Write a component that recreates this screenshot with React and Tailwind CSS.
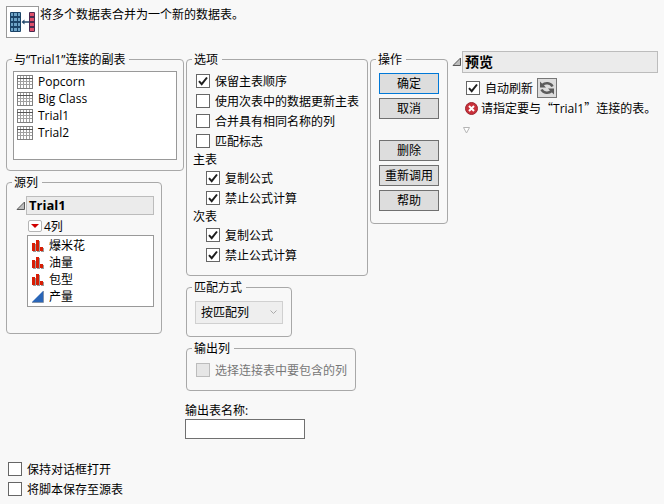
import React from "react";

const TABLES = ["Popcorn", "Big Class", "Trial1", "Trial2"];

const COLUMNS = [
  { name: "爆米花", type: "nominal" },
  { name: "油量", type: "nominal" },
  { name: "包型", type: "nominal" },
  { name: "产量", type: "continuous" },
];

function JoinIcon() {
  const rows = [0, 1, 2, 3];
  return (
    <svg width="27" height="22" viewBox="0 0 27 22" aria-hidden="true">
      <rect x="1" y="1" width="11" height="20" rx="1" fill="#1b4468" />
      {rows.map((r) => (
        <g key={r} fill="#6da3c6">
          <rect x="2" y={2 + r * 5} width="2" height="3" />
          <rect x="5" y={2 + r * 5} width="3" height="3" />
          <rect x="9" y={2 + r * 5} width="2" height="3" />
        </g>
      ))}
      <path d="M12.5 11l3-2.500v1.800h5v1.400h-5v1.800z" fill="#24486b" />
      <rect x="20" y="1" width="6" height="20" rx="1" fill="#4a2a50" />
      {rows.map((r) => (
        <rect key={r} x="21" y={2 + r * 5} width="4" height="3" fill="#e0506a" />
      ))}
    </svg>
  );
}

function TableIcon() {
  return (
    <svg width="16" height="14" viewBox="0 0 16 14" className="shrink-0" aria-hidden="true">
      <rect width="16" height="14" fill="#fff" />
      <path
        d="M0 3.5h16M0 6.5h16M0 9.5h16M3.5 0v14M6.5 0v14M9.5 0v14M12.5 0v14"
        stroke="#a0a0a0"
        fill="none"
      />
      <rect x="0.5" y="0.5" width="15" height="13" fill="none" stroke="#808080" />
      <path d="M0 3.5h16" stroke="#555" />
    </svg>
  );
}

function NominalIcon() {
  return (
    <svg width="12" height="12" viewBox="0 0 12 12" className="shrink-0" aria-hidden="true">
      <path d="M1 4h3v8H1zM5 1h3v11H5zM9 8h3v4H9z" fill="#9a9a9a" />
      <path d="M0 3h3v8H0zM4 0h3v11H4zM8 7h3v4H8z" fill="#d81e05" />
    </svg>
  );
}

function ContinuousIcon() {
  return (
    <svg width="12" height="12" viewBox="0 0 12 12" className="shrink-0" aria-hidden="true">
      <path d="M0 11L11 0v11z" fill="#2a66b8" />
      <path d="M0 11.5h11.5V0" fill="none" stroke="#8494ab" />
    </svg>
  );
}

function Disclosure({ label }) {
  return (
    <button type="button" aria-label={label} className="block shrink-0">
      <svg width="10" height="10" viewBox="0 0 10 10" aria-hidden="true">
        <path d="M1 8.5L8.5 1v7.5z" fill="#bdbdbd" stroke="#5a5a5a" />
      </svg>
    </button>
  );
}

function Check({ label, checked = false, disabled = false }) {
  return (
    <label className="flex h-5 items-center gap-[5px] whitespace-nowrap">
      <span className="grid shrink-0">
        <input
          type="checkbox"
          defaultChecked={checked}
          disabled={disabled}
          className="peer col-start-1 row-start-1 size-3.5 appearance-none border border-[#666] bg-white disabled:border-[#bcbcbc] disabled:bg-[#e6e6e6]"
        />
        <svg
          viewBox="0 0 14 14"
          className="pointer-events-none invisible col-start-1 row-start-1 size-3.5 peer-checked:visible"
          aria-hidden="true"
        >
          <path d="M3 7.2l2.7 3L11 3.5" fill="none" stroke="#1e1e1e" strokeWidth="2" />
        </svg>
      </span>
      <span className={disabled ? "text-[#777]" : ""}>{label}</span>
    </label>
  );
}

function Group({ title, className = "", bodyClass = "", children }) {
  return (
    <fieldset className={`min-w-0 rounded-[4px] border border-[#a8a8a8] ${className}`}>
      <legend className="ml-[5px] pr-1 pl-0.5">{title}</legend>
      <div className={bodyClass}>{children}</div>
    </fieldset>
  );
}

function ActionButton({ primary = false, children }) {
  return (
    <button
      type="button"
      className={`block h-[21px] w-full border bg-[#dddddd] text-center leading-[19px] ${
        primary ? "border-[#0078d7]" : "border-[#707070]"
      }`}
    >
      {children}
    </button>
  );
}

export default function App() {
  return (
    <main
      lang="zh-CN"
      className="min-h-screen bg-[#f8f8f8] px-1.5 pt-1.5 pb-1 font-['Open_Sans','Noto_Sans_CJK_SC',sans-serif] text-[12px] leading-[17px] text-black"
    >
      <header className="flex items-start gap-px">
        <div className="flex h-8 w-[33px] items-center justify-center border border-[#999] bg-white">
          <JoinIcon />
        </div>
        <p>将多个数据表合并为一个新的数据表。</p>
      </header>

      <div className="mt-[13px] flex items-start gap-0.5">
        <div className="flex w-[178px] shrink-0 flex-col items-start gap-[3px]">
          <Group title="与“Trial1”连接的副表" className="w-full" bodyClass="px-1.5 pt-[3px] pb-2.5">
            <ul role="listbox" aria-label="副表" className="min-h-[89px] border border-[#999] bg-white px-[3px] py-px">
              {TABLES.map((name) => (
                <li key={name} role="option" aria-selected="false" className="flex items-center gap-[5px]">
                  <TableIcon />
                  {name}
                </li>
              ))}
            </ul>
          </Group>

          <Group title="源列" className="w-[156px]" bodyClass="pt-[5px] pr-[7px] pb-[26px] pl-[9px]">
            <div className="flex items-center">
              <Disclosure label="折叠 Trial1" />
              <h2 className="flex-1 border border-[#bcbcbc] bg-[#ebebeb] px-0.5 text-[13px] font-bold">Trial1</h2>
            </div>
            <div className="mt-0.5 ml-3 flex h-[18px] items-center gap-0.5">
              <button type="button" aria-label="列选项" className="flex h-3 w-3.5 items-center justify-center rounded-[2px] border border-[#b5b5b5] bg-white">
                <svg width="8" height="4" viewBox="0 0 8 4" aria-hidden="true">
                  <path d="M0 0h8L4 4z" fill="#d00000" />
                </svg>
              </button>
              <span>4列</span>
            </div>
            <ul role="listbox" aria-label="源列" className="ml-[11px] border border-[#999] bg-white px-1 py-px">
              {COLUMNS.map((col) => (
                <li key={col.name} role="option" aria-selected="false" className="flex items-center gap-[5px]">
                  {col.type === "nominal" ? <NominalIcon /> : <ContinuousIcon />}
                  {col.name}
                </li>
              ))}
            </ul>
          </Group>
        </div>

        <div className="flex w-[182px] shrink-0 flex-col items-start gap-[3px]">
          <Group title="选项" className="w-full" bodyClass="px-[9px] pt-[3px] pb-2.5">
            <Check label="保留主表顺序" checked />
            <Check label="使用次表中的数据更新主表" />
            <Check label="合并具有相同名称的列" />
            <Check label="匹配标志" />
            <p className="-ml-[3px]">主表</p>
            <div className="ml-2.5">
              <Check label="复制公式" checked />
              <Check label="禁止公式计算" checked />
            </div>
            <p className="-ml-[3px]">次表</p>
            <div className="ml-2.5">
              <Check label="复制公式" checked />
              <Check label="禁止公式计算" checked />
            </div>
          </Group>

          <Group title="匹配方式" className="w-[106px]" bodyClass="px-2 pt-[5px] pb-3">
            <div className="grid items-center">
              <select
                aria-label="匹配方式"
                disabled
                className="col-start-1 row-start-1 h-[23px] w-full appearance-none border border-[#d0d0d0] bg-[#eeeeee] pl-[5px] text-black opacity-100"
              >
                <option>按匹配列</option>
              </select>
              <svg width="7" height="5" viewBox="0 0 7 5" className="pointer-events-none col-start-1 row-start-1 mr-1.5 justify-self-end" aria-hidden="true">
                <path d="M0.5 0.5l3 3 3-3" fill="none" stroke="#aaa" />
              </svg>
            </div>
          </Group>

          <Group title="输出列" className="w-[170px]" bodyClass="px-[9px] pt-[3px] pb-2.5">
            <Check label="选择连接表中要包含的列" disabled />
          </Group>

          <div className="mt-2 -ml-px">
            <label htmlFor="output-name" className="block">输出表名称:</label>
            <input id="output-name" type="text" className="block h-5 w-[120px] border border-[#707070] bg-white px-1" />
          </div>
        </div>

        <Group title="操作" className="w-[78px] shrink-0" bodyClass="px-2 pt-[5px] pb-3">
          <div className="flex flex-col gap-1">
            <ActionButton primary>确定</ActionButton>
            <ActionButton>取消</ActionButton>
          </div>
          <div className="mt-[21px] flex flex-col gap-1">
            <ActionButton>删除</ActionButton>
            <ActionButton>重新调用</ActionButton>
            <ActionButton>帮助</ActionButton>
          </div>
        </Group>

        <section className="ml-0.5 min-w-0 flex-1">
          <div className="flex items-center">
            <Disclosure label="折叠预览" />
            <h2 className="flex-1 border border-[#bcbcbc] bg-[#ebebeb] px-0.5 text-[14px] leading-5 font-bold">预览</h2>
          </div>
          <div className="mt-[5px] ml-3.5 flex items-center gap-1">
            <Check label="自动刷新" checked />
            <button type="button" aria-label="刷新" className="flex size-5 items-center justify-center border border-[#777] bg-[#dddddd]">
              <svg width="16" height="16" viewBox="0 0 16 16" aria-hidden="true">
                <path d="M3.500 5C6 2.500 11.500 2.500 13.500 6.500M12.500 11C10 13.500 4.500 13.500 2.500 9.500" fill="none" stroke="#5c5c5c" strokeWidth="2.6" />
                <path d="M1 1.500v6h6zM15 14.500v-6H9z" fill="#5c5c5c" />
              </svg>
            </button>
          </div>
          <div className="mt-px ml-[13px] flex items-center gap-[3px]">
            <svg width="13" height="13" viewBox="0 0 13 13" className="shrink-0" aria-hidden="true">
              <circle cx="6.5" cy="6.5" r="6" fill="#c9303a" stroke="#9c2630" />
              <path d="M4 4l5 5M9 4l-5 5" stroke="#fff" strokeWidth="2" />
            </svg>
            <p className="whitespace-nowrap">
              请指定要与<span className="font-['Noto_Sans_CJK_SC',sans-serif]">“</span>Trial1
              <span className="font-['Noto_Sans_CJK_SC',sans-serif]">”</span>连接的表。
            </p>
          </div>
          <button type="button" aria-label="更多" className="mt-2.5 ml-[11px] block">
            <svg width="7" height="7" viewBox="0 0 7 7" aria-hidden="true">
              <path d="M0.500 0.500h6L3.500 6z" fill="#fff" stroke="#b5b5b5" />
            </svg>
          </button>
        </section>
      </div>

      <div className="mt-5 ml-0.5">
        <Check label="保持对话框打开" />
        <Check label="将脚本保存至源表" />
      </div>
    </main>
  );
}
